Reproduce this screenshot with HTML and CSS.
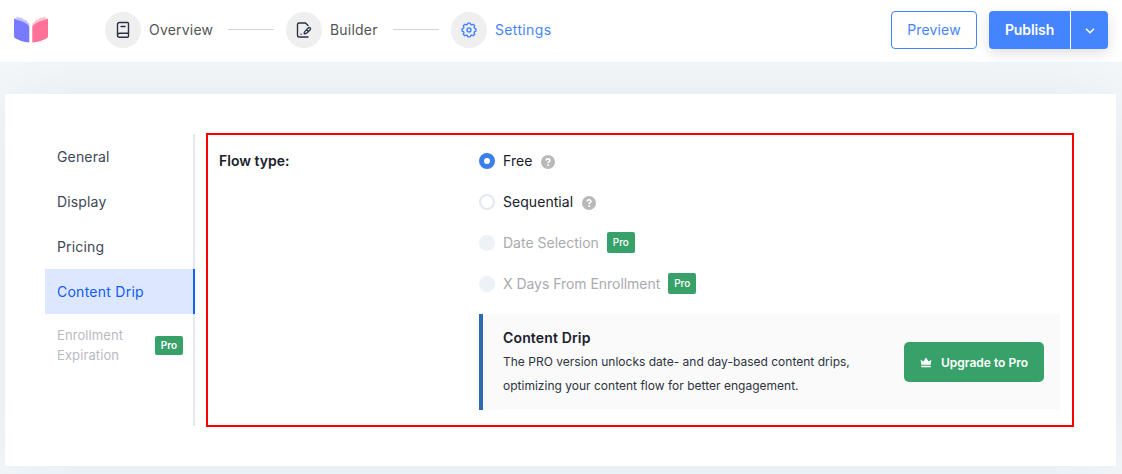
FILE: index.html
```html
<!DOCTYPE html>
<html lang="en">
<head>
<meta charset="utf-8">
<title>Course Settings</title>
<link rel="stylesheet" href="styles.css">
</head>
<body>
<header class="header">
  <svg class="logo" width="36" height="28" viewBox="0 0 36 28">
    <path fill="#c3c5ff" d="M1 4 2.500 3l1 .8L3.800 1.200 7 3 8 2.200l3.500 3 .3-1.200 4.700 5V11L1 6z"/>
    <path fill="#ffc0d1" d="M35 4 33.500 3l-1 .8L32.200 1.200 29 3 28 2.200l-3.500 3-.3-1.200-4.700 5V11L35 6z"/>
    <path fill="#787bff" d="M1 3.800C6 6 13 6.500 16.300 11.500v16C11 27 5 25 2.300 23.200 1.300 22.500 1 22 1 20.500z"/>
    <path fill="#ff7199" d="M35 3.800C30 6 23 6.500 19.300 11.500v16C25 27 31 25 33.700 23.200 34.700 22.500 35 22 35 20.500z"/>
  </svg>
  <nav class="steps">
    <a class="step"><span class="step-icon">
      <svg width="16" height="18" viewBox="0 0 16 18" fill="none" stroke="#2b3147" stroke-width="1.400" stroke-linecap="round" stroke-linejoin="round"><path d="M2.500 14V3.500a2 2 0 0 1 2-2h8a1 1 0 0 1 1 1v12.800a1 1 0 0 1-1 1h-8a2 2 0 0 1-2-2 2 2 0 0 1 2-2h9M6 5.500h4"/></svg>
    </span><span class="step-label">Overview</span></a>
    <span class="step-line"></span>
    <a class="step"><span class="step-icon">
      <svg width="18" height="18" viewBox="0 0 18 18" fill="none" stroke="#2b3147" stroke-width="1.400" stroke-linecap="round" stroke-linejoin="round"><path d="M13 4.500 10.500 2H4a1.500 1.500 0 0 0-1.500 1.500v11A1.500 1.500 0 0 0 4 16h9M6 13.200h.1M9.200 12.800c-.5-1.500.8-3 4.300-6.100.8-.7 2.700.3 1.800 1.700-2.300 3.100-3.800 4.700-6.100 4.400zM11.800 9l1.400 1.300"/></svg>
    </span><span class="step-label">Builder</span></a>
    <span class="step-line"></span>
    <a class="step step-current"><span class="step-icon">
      <svg width="16" height="16" viewBox="0 0 16 16" fill="none" stroke="#4584ff" stroke-width="1.400" stroke-linejoin="round"><path d="M6.300 2.500 6.900 1.100h2.200l.6 1.400 1 .4 1.500-.6 1.500 1.500-.6 1.500.4 1 1.400.6v2.200l-1.400.6-.4 1 .6 1.500-1.500 1.500-1.500-.6-1 .4-.6 1.400H6.900l-.6-1.400-1-.4-1.500.6-1.500-1.500.6-1.500-.4-1-1.400-.6V6.900l1.400-.6.4-1-.6-1.500 1.500-1.500 1.500.6z"/><circle cx="8" cy="8" r="2"/></svg>
    </span><span class="step-label">Settings</span></a>
  </nav>
  <div class="actions">
    <button class="btn preview">Preview</button>
    <div class="publish-group">
      <button class="btn publish">Publish</button>
      <button class="btn publish-more" aria-label="More"><svg width="10" height="6" viewBox="0 0 10 6" fill="none" stroke="#fff" stroke-width="1.600"><path d="m1 .7 4 4 4-4"/></svg></button>
    </div>
  </div>
</header>
<main class="card">
  <nav class="tabs">
    <a class="tab">General</a>
    <a class="tab">Display</a>
    <a class="tab">Pricing</a>
    <a class="tab tab-active">Content Drip</a>
    <a class="tab tab-locked"><span>Enrollment<br>Expiration</span><span class="badge badge-tab">Pro</span></a>
  </nav>
  <section class="panel">
    <div class="field-label">Flow type:</div>
    <div class="field">
      <div class="options">
        <label class="option"><span class="radio radio-on"></span><span class="option-text">Free</span><svg class="help" width="14" height="14" viewBox="0 0 14 14"><circle cx="7" cy="7" r="7" fill="#b9b9b9"/><path d="M5.200 5.500C5.200 3.300 8.900 3.300 8.900 5.400 8.900 6.600 7.100 6.700 7.100 8" fill="none" stroke="#fff" stroke-width="1.600"/><circle cx="7.100" cy="10" r="1" fill="#fff"/></svg></label>
        <label class="option"><span class="radio"></span><span class="option-text">Sequential</span><svg class="help" width="14" height="14" viewBox="0 0 14 14"><circle cx="7" cy="7" r="7" fill="#b9b9b9"/><path d="M5.200 5.500C5.200 3.300 8.900 3.300 8.900 5.400 8.900 6.600 7.100 6.700 7.100 8" fill="none" stroke="#fff" stroke-width="1.600"/><circle cx="7.100" cy="10" r="1" fill="#fff"/></svg></label>
        <label class="option option-locked"><span class="radio radio-off"></span><span class="option-text">Date Selection</span><span class="badge">Pro</span></label>
        <label class="option option-locked"><span class="radio radio-off"></span><span class="option-text">X Days From Enrollment</span><span class="badge">Pro</span></label>
      </div>
      <aside class="promo">
        <div class="promo-copy">
          <h2 class="promo-title">Content Drip</h2>
          <p class="promo-text">The PRO version unlocks date- and day-based content drips,<br>optimizing your content flow for better engagement.</p>
        </div>
        <button class="upgrade"><svg width="12" height="11" viewBox="0 0 12 11" fill="#fff"><path d="M1.300 7.700.6 2.700l2.800 1.900L6 .6l2.600 4 2.800-1.900-.7 5zM1.300 8.800h9.400v1.500H1.300z"/></svg><span>Upgrade to Pro</span></button>
      </aside>
    </div>
  </section>
</main>
</body>
</html>
```
FILE: styles.css
```css
* { box-sizing: border-box; }
body {
  margin: 0;
  height: 474px;
  overflow: hidden;
  background: #f3f7fa;
  font-family: Inter, "Liberation Sans", sans-serif;
  font-size: 14px;
  color: #1a202c;
}
button { font: inherit; border: 0; padding: 0; margin: 0; }
.header {
  height: 62px;
  background: #fff;
  display: flex;
  align-items: flex-start;
  padding: 0 14px 0 13px;
}
.logo { margin-top: 15px; }
.steps { display: flex; align-items: center; margin: 12px 0 0 56px; }
.step { display: flex; align-items: center; gap: 8px; }
.step-icon {
  width: 36px;
  height: 36px;
  border-radius: 50%;
  background: #efefef;
  display: flex;
  align-items: center;
  justify-content: center;
}
.step-label {
  width: 64px;
  padding-bottom: 1px;
  font-weight: 400;
  color: #555;
  letter-spacing: .2px;
  white-space: nowrap;
}
.step:nth-child(3) .step-label { width: 47px; }
.step-current .step-label { color: #4584ff; letter-spacing: .35px; }
.step-line { width: 46px; height: 1px; background: #d0d4d3; margin: 0 12px 1px 15px; }
.step:nth-child(3) + .step-line { margin-left: 16px; }
.actions { display: flex; gap: 12px; margin: 11px 0 0 auto; }
.btn { height: 38px; padding-bottom: 2px; font-weight: 500; }
.preview {
  width: 86px;
  border: 1px solid #4584ff;
  border-radius: 4px;
  background: #fff;
  color: #4584ff;
  font-weight: 400;
  letter-spacing: .15px;
}
.publish-group {
  display: flex;
  gap: 1px;
  border-radius: 4px;
  box-shadow: 0 4px 14px rgba(0, 0, 0, .13);
}
.publish, .publish-more { background: #4584ff; color: #fff; }
.publish { width: 81px; border-radius: 4px 0 0 4px; font-weight: 600; letter-spacing: -.1px; }
.publish-more {
  width: 37px;
  padding: 1px 0 0 1px;
  border-radius: 0 4px 4px 0;
  display: flex;
  align-items: center;
  justify-content: center;
}
.card {
  margin: 32px 6px 0 5px;
  height: 372px;
  background: #fff;
  box-shadow: 0 0 60px rgba(0, 0, 0, .06);
  display: flex;
  padding: 39px 42px 39px 40px;
  clip-path: inset(-32px -6px -8px -5px);
}
.tabs {
  width: 150px;
  margin: 1px 11px 1px 0;
  background: linear-gradient(#e2e8f0, #e2e8f0) right / 2px 100% no-repeat;
}
.tab {
  display: flex;
  align-items: center;
  height: 45px;
  padding: 0 12px;
  font-weight: 400;
  color: #3d4757;
  letter-spacing: .15px;
}
.tab-active { background: #dde7ff; border-right: 2px solid #0f62fe; color: #0f5cfa; letter-spacing: .25px; }
.tab-locked {
  height: 62px;
  justify-content: space-between;
  font-size: 13px;
  line-height: 20px;
  letter-spacing: .1px;
  color: #b7bbc2;
}
.panel { flex: 1; border: 2px solid #fb0000; display: flex; padding: 8px 12px 15px 11px; }
.field-label { width: 260px; font-weight: 600; line-height: 36px; }
.field { flex: 1; }
.options { display: flex; flex-direction: column; }
.option { height: 41px; padding-bottom: 5px; display: flex; align-items: center; line-height: 18px; }
.option:last-child { height: 43px; padding-bottom: 7px; }
.option-text { margin: 0 9px 0 8px; padding-bottom: 1px; letter-spacing: .05px; }
.option-locked .option-text { margin-right: 8px; color: #a9abb0; letter-spacing: 0; }
.option-locked:last-child .option-text { letter-spacing: -.04px; }
.radio { width: 16px; height: 16px; border-radius: 50%; border: 2px solid #e2e8f0; }
.radio-on { border: 5px solid #3b7fec; background: #fff; }
.radio-off { background: #edf2f7; border-color: #edf2f7; }
.help { margin-top: 2px; }
.badge {
  width: 28px;
  height: 21px;
  margin-top: -1px;
  border-radius: 2px;
  background: #38a169;
  color: #fff;
  font-size: 10px;
  line-height: 20px;
  font-weight: 500;
  text-align: center;
}
.badge-tab { height: 19px; line-height: 19px; font-weight: 600; margin-top: 1px; }
.promo {
  margin-top: 5px;
  height: 96px;
  border-left: 4px solid #2b6cb0;
  background: #fafafa;
  padding: 0 16px 0 20px;
  display: flex;
  align-items: center;
  justify-content: space-between;
}
.promo-title { margin: 0; font-size: 14px; line-height: 24px; font-weight: 600; letter-spacing: .15px; }
.promo-text { margin: 0; font-size: 12px; line-height: 24px; color: #2d3340; white-space: nowrap; letter-spacing: .01px; }
.upgrade {
  width: 140px;
  height: 40px;
  border-radius: 5px;
  background: #38a169;
  color: #fff;
  font-size: 12px;
  font-weight: 600;
  display: flex;
  align-items: center;
  justify-content: center;
  gap: 9px;
}
```
